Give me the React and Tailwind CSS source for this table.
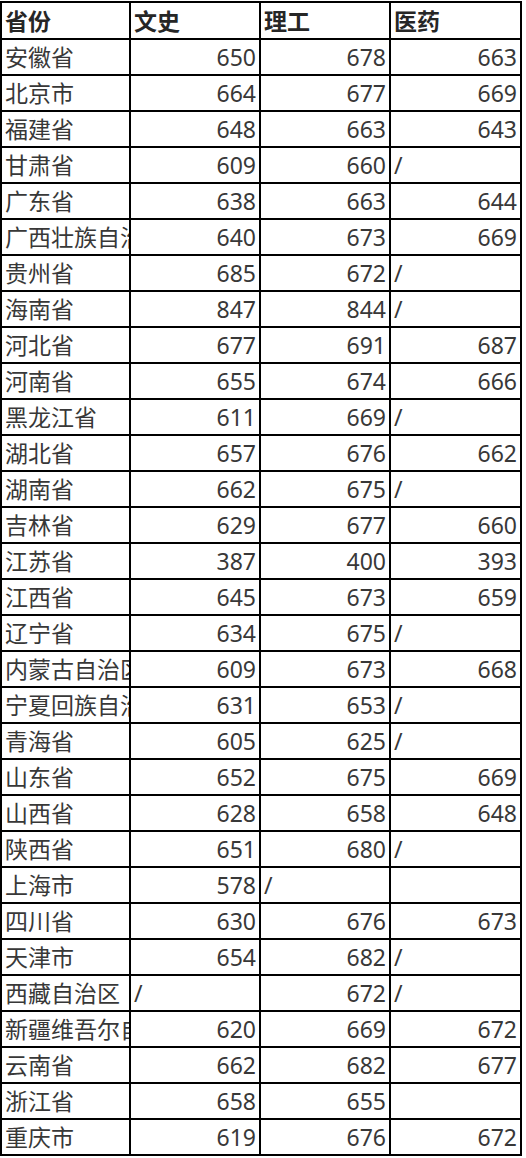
const rows = [
  ["安徽省", "650", "678", "663"],
  ["北京市", "664", "677", "669"],
  ["福建省", "648", "663", "643"],
  ["甘肃省", "609", "660", "/"],
  ["广东省", "638", "663", "644"],
  ["广西壮族自治区", "640", "673", "669"],
  ["贵州省", "685", "672", "/"],
  ["海南省", "847", "844", "/"],
  ["河北省", "677", "691", "687"],
  ["河南省", "655", "674", "666"],
  ["黑龙江省", "611", "669", "/"],
  ["湖北省", "657", "676", "662"],
  ["湖南省", "662", "675", "/"],
  ["吉林省", "629", "677", "660"],
  ["江苏省", "387", "400", "393"],
  ["江西省", "645", "673", "659"],
  ["辽宁省", "634", "675", "/"],
  ["内蒙古自治区", "609", "673", "668"],
  ["宁夏回族自治区", "631", "653", "/"],
  ["青海省", "605", "625", "/"],
  ["山东省", "652", "675", "669"],
  ["山西省", "628", "658", "648"],
  ["陕西省", "651", "680", "/"],
  ["上海市", "578", "/", ""],
  ["四川省", "630", "676", "673"],
  ["天津市", "654", "682", "/"],
  ["西藏自治区", "/", "672", "/"],
  ["新疆维吾尔自治区", "620", "669", "672"],
  ["云南省", "662", "682", "677"],
  ["浙江省", "658", "655", ""],
  ["重庆市", "619", "676", "672"],
];

const widths = ["w-[129px]", "w-[130px]", "w-[130px]", "w-[131px]"];

// numbers sit on the right like spreadsheet values, "/" stays on the left like text
const Cell = ({ value, col, header }) => {
  const isNum = !header && col > 0 && /^\d+$/.test(value);
  return (
    <div
      className={`${widths[col]} shrink-0 border-r-2 border-b-2 border-black flex items-center overflow-hidden whitespace-nowrap ${
        isNum ? "justify-end pr-[3px]" : "justify-start pl-[3px]"
      } ${header ? "h-[37px] font-bold text-[#262626]" : "h-[36px] text-[#383838]"}`}
    >
      <span className="pt-px">{value}</span>
    </div>
  );
};

export default function App() {
  return (
    <div
      className="w-[526px] h-[1158px] bg-white overflow-hidden pt-px text-[23px] leading-none"
      style={{ fontFamily: '"Noto Sans", "Noto Sans CJK SC", sans-serif' }}
    >
      <div className="w-[522px] border-l-2 border-t-2 border-black flex flex-col">
        <div className="flex">
          {["省份", "文史", "理工", "医药"].map((h, i) => (
            <Cell key={h} value={h} col={i} header />
          ))}
        </div>
        {rows.map((r) => (
          <div key={r[0]} className="flex">
            {r.map((v, i) => (
              <Cell key={i} value={v} col={i} />
            ))}
          </div>
        ))}
      </div>
    </div>
  );
}
